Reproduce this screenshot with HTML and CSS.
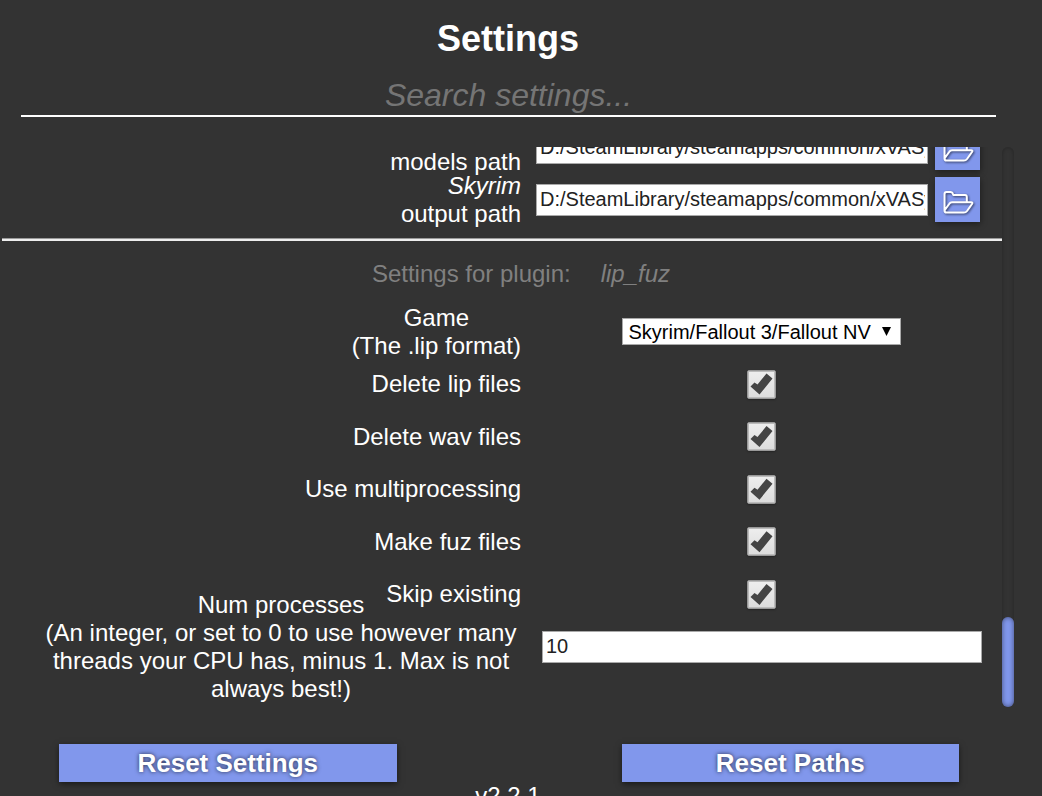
FILE: index.html
```
<!DOCTYPE html>
<html lang="en">
<head>
  <meta charset="UTF-8">
  <title>Settings</title>
  <link rel="stylesheet" href="styles.css">
</head>
<body>

  <div class="page">
    <h1>Settings</h1>
    <input class="search" type="text" placeholder="Search settings..." aria-label="Search settings">

    <div class="scroller">
      <div class="settings">
        <div class="row">
          <label class="path-label" for="modelsPath">models path</label>
          <div class="control path">
            <input type="text" id="modelsPath" value="D:/SteamLibrary/steamapps/common/xVASynth/resources/app/models/skyrim">
            <button class="folder" type="button" aria-label="Browse models path">
              <svg viewBox="0 0 45 45"><path d="M9.500 33.500V17Q9.500 15 11.500 15H15.500Q17 15 17.500 16L18.300 18H30Q31.800 18 31.800 20V24.600M9.500 33.500L14.500 26.500Q15.300 25.200 17 25.200H36Q38.200 25.200 37 27L32 34Q30.800 35.600 28.800 35.600H11.500Q9.500 35.600 9.500 33.500"/></svg>
            </button>
          </div>
        </div>
        <div class="row">
          <label class="path-label" for="outputPath"><i>Skyrim</i><br>output path</label>
          <div class="control path">
            <input type="text" id="outputPath" value="D:/SteamLibrary/steamapps/common/xVASynth/resources/app/output/skyrim">
            <button class="folder" type="button" aria-label="Browse output path">
              <svg viewBox="0 0 45 45"><path d="M9.500 33.500V17Q9.500 15 11.500 15H15.500Q17 15 17.500 16L18.300 18H30Q31.800 18 31.800 20V24.600M9.500 33.500L14.500 26.500Q15.300 25.200 17 25.200H36Q38.200 25.200 37 27L32 34Q30.800 35.600 28.800 35.600H11.500Q9.500 35.600 9.500 33.500"/></svg>
            </button>
          </div>
        </div>

        <hr>

        <div class="plugin-title">
          <span>Settings for plugin:</span>
          <i>lip_fuz</i>
        </div>

        <div class="row">
          <label for="game">Game<br>(The .lip format)</label>
          <div class="control">
            <select id="game">
              <option>Skyrim/Fallout 3/Fallout NV</option>
              <option>Fallout 4</option>
            </select>
          </div>
        </div>

        <div class="checks">
          <div class="row">
            <label for="deleteLip">Delete lip files</label>
            <div class="control"><input type="checkbox" id="deleteLip" checked></div>
          </div>
          <div class="row">
            <label for="deleteWav">Delete wav files</label>
            <div class="control"><input type="checkbox" id="deleteWav" checked></div>
          </div>
          <div class="row">
            <label for="useMp">Use multiprocessing</label>
            <div class="control"><input type="checkbox" id="useMp" checked></div>
          </div>
          <div class="row">
            <label for="makeFuz">Make fuz files</label>
            <div class="control"><input type="checkbox" id="makeFuz" checked></div>
          </div>
          <div class="row">
            <label for="skipExisting">Skip existing</label>
            <div class="control"><input type="checkbox" id="skipExisting" checked></div>
          </div>
        </div>

        <div class="row">
          <label for="numProcesses">Num processes<br>(An integer, or set to 0 to use however many threads your CPU has, minus 1. Max is not always best!)</label>
          <div class="control number"><input type="text" id="numProcesses" value="10"></div>
        </div>
      </div>
      <div class="track"><div class="thumb"></div></div>
    </div>

    <div class="footer">
      <div class="buttons">
        <button type="button">Reset Settings</button>
        <button type="button">Reset Paths</button>
      </div>
      <div class="version">v2.2.1</div>
    </div>
  </div>

</body>
</html>
```
FILE: styles.css
```
* {
  box-sizing: border-box;
}
body {
  margin: 0;
  background: #333;
  color: #fff;
  font-family: "Liberation Sans", Arial, sans-serif;
  font-size: 24px;
  line-height: 28px;
}
input, select, button {
  font-family: inherit;
  margin: 0;
}
.page {
  height: 100vh;
  padding: 0 28px 0 2px;
  display: flex;
  flex-direction: column;
  overflow: hidden;
}
h1 {
  margin: 19px 0 0;
  font-size: 36px;
  line-height: 40px;
  text-align: center;
}
.search {
  margin: 15px 18px 30px 19px;
  height: 43px;
  flex-shrink: 0;
  padding: 2px 0 0;
  border: none;
  border-bottom: 2px solid #fff;
  background: none;
  color: #fff;
  font-size: 32px;
  text-align: center;
}
.search::placeholder {
  color: #757575;
  font-style: italic;
}

/* settings list, scrolled to the end */
.scroller {
  flex: 1;
  min-height: 0;
  display: flex;
}
.settings {
  flex: 1;
  display: flex;
  flex-direction: column;
  justify-content: flex-end;
  padding-bottom: 34px;
  overflow: hidden;
}
.row {
  display: grid;
  grid-template-columns: 519fr 481fr;
  grid-template-rows: 52px;
  flex: 0 0 52px;
  align-items: center;
}
.row label {
  justify-self: end;
  max-width: 480px;
  text-align: center;
}
.row .path-label {
  align-self: end;
  margin-bottom: -2px;
  text-align: right;
}
.control {
  display: flex;
  justify-content: center;
  align-items: center;
  min-width: 0;
  padding: 0 16px 0 15px;
}
.control input[type="text"] {
  flex: 1;
  min-width: 0;
  height: 32px;
  padding: 0 2px 2px 3px;
  border: 1px solid #a9a9a9;
  background: #fff;
  color: #222;
  font-size: 20px;
}
.path {
  gap: 7px;
  padding-right: 22px;
}
.number {
  padding: 0 20px 0 21px;
}
.folder {
  width: 45px;
  height: 45px;
  padding: 0;
  border: none;
  background: #8197ec;
  box-shadow: 1px 2px 6px rgba(0,0,0,0.4);
  cursor: pointer;
}
.folder svg {
  display: block;
  fill: none;
  stroke: #fff;
  stroke-width: 2;
  stroke-linejoin: round;
  filter: drop-shadow(1px 1px 1px rgba(0,0,0,0.6));
}
hr {
  width: 100%;
  flex-shrink: 0;
  height: 3px;
  margin: 12px 0 0;
  border: none;
  border-top: 1px solid #9a9a9a;
  background: #eee;
}
.plugin-title {
  display: flex;
  flex: 0 0 65px;
  align-items: center;
  justify-content: center;
  gap: 30px;
  padding-left: 38px;
  color: #808080;
}
select {
  appearance: none;
  width: 279px;
  height: 27px;
  padding: 0 6px;
  border: 1px solid #a9a9a9;
  border-radius: 0;
  background: #fff url("data:image/svg+xml,%3Csvg xmlns='http://www.w3.org/2000/svg' width='9' height='9'%3E%3Cpath d='M0 0h9L4.500 9z'/%3E%3C/svg%3E") no-repeat right 9px center;
  color: #000;
  font-size: 20px;
}
.checks {
  display: flex;
  flex-direction: column;
  flex: 0 0 263px;
}
.checks .row {
  flex: 1;
}
input[type="checkbox"] {
  appearance: none;
  width: 29px;
  height: 29px;
  border: 1px solid #999;
  border-radius: 2px;
  background: linear-gradient(#eee, #dcdcdc);
  box-shadow: inset 0 0 0 1px #bbb, 0 1px 2px rgba(0,0,0,0.3);
}
input[type="checkbox"]:checked::before {
  content: "";
  display: block;
  width: 27px;
  height: 27px;
  background: #444;
  clip-path: polygon(3px 16px, 7px 12px, 10px 14px, 19px 3px, 25px 8px, 12px 24px);
}

.track {
  width: 12px;
  display: flex;
  align-items: flex-end;
  border-radius: 6px;
  box-shadow: inset 0 0 4px rgba(0,0,0,0.3);
}
.thumb {
  width: 100%;
  height: 16%;
  border-radius: 6px;
  background: #8197ec;
  box-shadow: inset 0 0 5px rgba(0,0,0,0.5);
}

/* 1px keeps the odd heights on the upper pixel when centred */
.folder, select {
  margin-bottom: 1px;
}

.footer {
  height: 89px;
  flex-shrink: 0;
  padding-top: 37px;
}
.buttons {
  display: flex;
  justify-content: space-between;
  padding: 0 55px 0 57px;
}
.buttons button {
  width: 37.5%;
  height: 38px;
  padding: 0;
  border: none;
  background: #8197ec;
  color: #fff;
  font-size: 26px;
  font-weight: bold;
  text-shadow: 0 0 4px rgba(0,0,0,0.7);
  box-shadow: 0 2px 6px rgba(0,0,0,0.5);
  cursor: pointer;
}
.version {
  text-align: center;
}
```
